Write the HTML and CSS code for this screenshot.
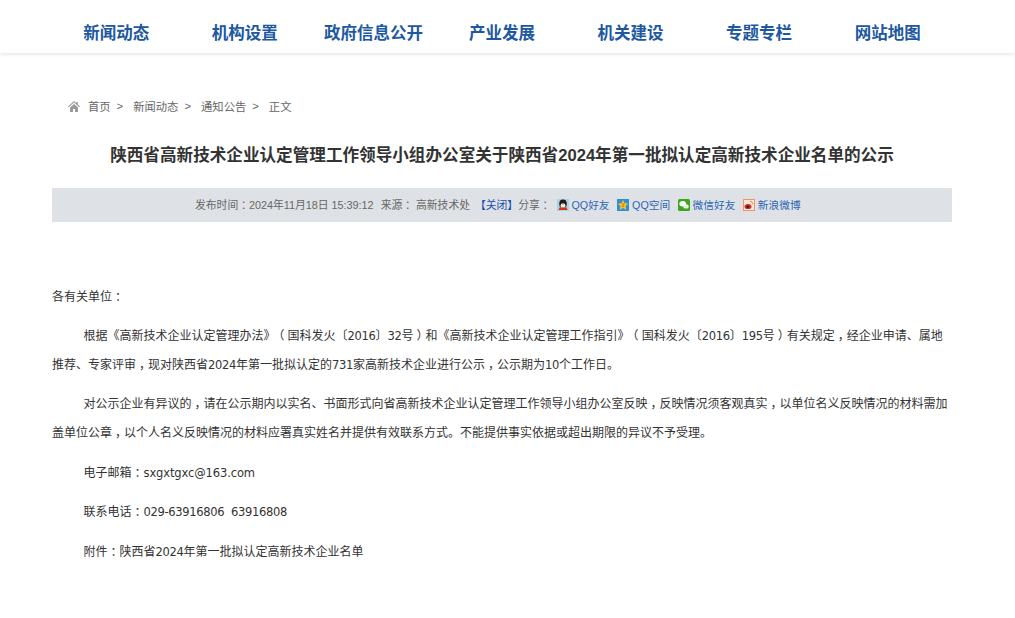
FILE: index.html
```html
<!DOCTYPE html>
<html lang="zh-CN">
<head>
<meta charset="utf-8">
<title>公示</title>
<link rel="stylesheet" href="styles.css">
</head>
<body>
<header class="top">
  <nav class="nav">
    <a>新闻动态</a><a>机构设置</a><a>政府信息公开</a><a>产业发展</a><a>机关建设</a><a>专题专栏</a><a>网站地图</a>
  </nav>
</header>
<main class="wrap">
  <div class="crumb">
    <svg class="home" viewBox="0 0 12 11" width="12" height="11"><path fill="#9a9a9a" d="M6 0 0 5.400l.7.8L6 1.600l5.300 4.600.7-.8L9.800 3.500V1H8.300v1.200zM2 6.500V11h3V8h2v3h3V6.500L6 3z"/></svg>
    <span>首页</span><i>&gt;</i><span>新闻动态</span><i>&gt;</i><span>通知公告</span><i>&gt;</i><span>正文</span>
  </div>
  <h1 class="title">陕西省高新技术企业认定管理工作领导小组办公室关于陕西省2024年第一批拟认定高新技术企业名单的公示</h1>
  <div class="meta">
    <span class="info">发布时间<span class="m">：</span>2024年11月18日 15:39:12</span>
    <span class="info src">来源<span class="m">：</span> 高新技术处</span>
    <a class="close">【关闭】</a><span class="info">分享<span class="m">：</span></span>
    <a class="share first">
      <svg viewBox="0 0 12 12" width="12" height="12"><rect width="12" height="12" fill="#a9d3e6"/><ellipse cx="6" cy="4.800" rx="3.800" ry="4.300" fill="#1c1c1c"/><ellipse cx="6" cy="6.700" rx="2.500" ry="2.300" fill="#f4f4f4"/><path d="M2.500 8.500h7l1 2.500h-9z" fill="#d8301c"/><path d="M4.300 4.500h3.400L6 6z" fill="#f0a020"/></svg>QQ好友</a>
    <a class="share">
      <svg viewBox="0 0 12 12" width="12" height="12"><rect width="12" height="12" fill="#2f8fd8"/><path d="M6 .8l1.600 3.400 3.700.4-2.700 2.500.7 3.700L6 9l-3.300 1.800.7-3.700L.7 4.600l3.700-.4z" fill="#f6c228"/><path d="M4.800 5h2.400L5 7.500h2.200" stroke="#c8741a" stroke-width=".8" fill="none"/></svg>QQ空间</a>
    <a class="share">
      <svg viewBox="0 0 12 12" width="12" height="12"><rect width="12" height="12" rx="1.500" fill="#3da51f"/><ellipse cx="4.700" cy="4.800" rx="3.300" ry="2.700" fill="#fff"/><ellipse cx="8" cy="7.400" rx="2.700" ry="2.200" fill="#e4f5dc"/></svg>微信好友</a>
    <a class="share">
      <svg viewBox="0 0 12 12" width="12" height="12"><rect width="12" height="12" fill="#ee9468"/><rect x="1" y="1" width="10" height="10" fill="#fbe8dc"/><ellipse cx="5" cy="7.500" rx="3.500" ry="2.600" fill="#d42a20"/><circle cx="4.800" cy="7.700" r="1.300" fill="#222"/><path d="M7 2.500a2.500 2.500 0 0 1 2.800 3" stroke="#e8861c" fill="none"/></svg>新浪微博</a>
  </div>
  <article class="body">
    <p class="flush">各有关单位<span class="m">：</span></p>
    <p>根据《高新技术企业认定管理办法》<span class="m">（</span>国科发火〔<span class="n">2016</span>〕<span class="n">32</span>号<span class="m">）</span>和《高新技术企业认定管理工作指引》<span class="m">（</span>国科发火〔<span class="n">2016</span>〕<span class="n">195</span>号<span class="m">）</span>有关规定<span class="m">，</span>经企业申请、属地推荐、专家评审<span class="m">，</span>现对陕西省<span class="n">2024</span>年第一批拟认定的<span class="n">731</span>家高新技术企业进行公示<span class="m">，</span>公示期为<span class="n">10</span>个工作日。</p>
    <p>对公示企业有异议的<span class="m">，</span>请在公示期内以实名、书面形式向省高新技术企业认定管理工作领导小组办公室反映<span class="m">，</span>反映情况须客观真实<span class="m">，</span>以单位名义反映情况的材料需加盖单位公章<span class="m">，</span>以个人名义反映情况的材料应署真实姓名并提供有效联系方式。不能提供事实依据或超出期限的异议不予受理。</p>
    <p>电子邮箱<span class="m">：</span><span class="n mail">sxgxtgxc@163.com</span></p>
    <p>联系电话<span class="m">：</span><span class="n">029-63916806&nbsp; 63916808</span></p>
    <p>附件<span class="m">：</span>陕西省<span class="n">2024</span>年第一批拟认定高新技术企业名单</p>
  </article>
</main>
</body>
</html>
```
FILE: styles.css
```css
* { box-sizing: border-box; }
html, body { margin: 0; padding: 0; background: #fff; }
body {
  font-family: "Noto Sans CJK SC", sans-serif;
  font-size: 12px;
  color: #333;
  height: 618px;
  overflow: hidden;
  text-spacing-trim: space-all;
}
.top {
  height: 53px;
  background: #fff;
  box-shadow: 0 1px 4px rgba(0, 0, 0, .12);
}
.nav {
  display: grid;
  grid-template-columns: repeat(7, 128.57px);
  width: 900px;
  margin-left: 52px;
  height: 53px;
  padding-top: 10px;
  align-items: center;
  text-align: center;
  font-size: 16.500px;
  font-weight: 700;
  color: #20589f;
}
.wrap { width: 900px; margin-left: 52px; }
.crumb {
  display: flex;
  align-items: center;
  height: 20px;
  margin-top: 43px;
  padding-left: 16px;
  font-size: 11.300px;
  color: #666;
}
.home { margin-right: 8px; }
.crumb i { font-style: normal; margin: 0 10px 0 6px; font-family: "Liberation Sans", sans-serif; }
.title {
  margin: 25px 0 0;
  height: 29px;
  line-height: 29px;
  font-family: "Liberation Sans", "Noto Sans CJK SC", sans-serif;
  font-size: 16.600px;
  font-weight: 700;
  text-align: center;
  color: #333;
  white-space: nowrap;
}
.meta {
  display: flex;
  align-items: center;
  height: 34px;
  margin-top: 18px;
  padding: 0 0 2px 143px;
  background: #dee2e6;
  font-family: "Liberation Sans", "Noto Sans CJK SC", sans-serif;
  font-size: 10.800px;
  color: #666;
  white-space: nowrap;
}
.src { margin-left: 7px; }
.close { color: #1c4fb0; margin-left: 5px; }
.share { display: inline-flex; align-items: center; color: #2e67b5; margin-left: 7.500px; gap: 3px; font-size: 10.700px; }
.share svg { position: relative; top: 1px; }
.share.first { margin-left: 6px; }
.body { margin-top: 58px; }
.body p {
  margin: 0 0 10.500px;
  line-height: 29px;
  text-indent: 31.500px;
  font-size: 12px;
  color: #333;
}
.body p.flush { text-indent: 0; padding-top: 1px; margin-bottom: 9.500px; }
.n {
  font-family: "DejaVu Sans", sans-serif;
  font-size: 11.500px;
  line-height: 1;
  letter-spacing: -.32px;
}
.n.mail { letter-spacing: -.12px; }
.m {
  font-family: "Noto Sans CJK SC", sans-serif;
  font-feature-settings: "halt";
  padding: 0 .25em;
  line-height: 1;
}
```
